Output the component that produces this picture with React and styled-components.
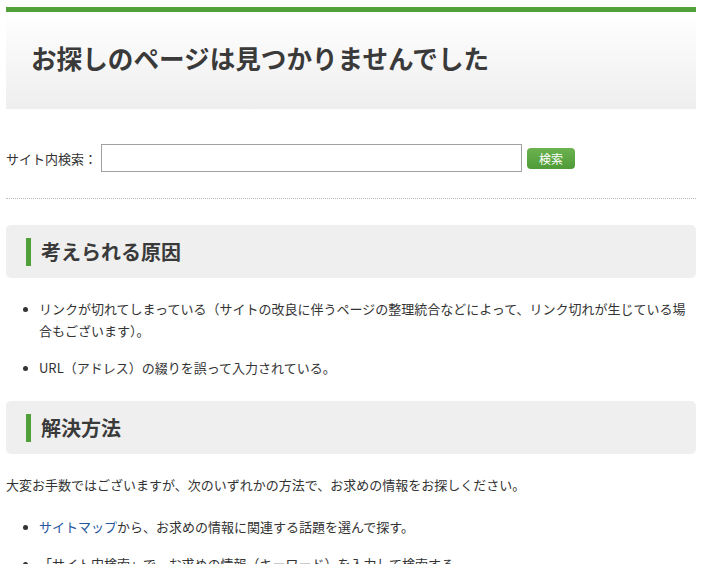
import styled, { createGlobalStyle } from 'styled-components';

const GlobalStyle = createGlobalStyle`
    html, body {
        margin: 0;
        padding: 0;
        background: #fff;
    }
    body {
        font-family: "Noto Sans CJK JP", "Noto Sans", sans-serif;
        color: #333;
        font-size: 13px;
    }
`;

const Page = styled.div`
    padding: 7px 6px 0 6px;
`;

const TitleBox = styled.header`
    border-top: 5px solid #52a03a;
    background: linear-gradient(to bottom, #ffffff 0%, #eeeeee 100%);
    height: 97px;
    display: flex;
    align-items: center;
    padding: 0 25px;
    h1 {
        margin: 0;
        font-size: 25.6px;
        font-weight: bold;
        color: #3a3a3a;
        line-height: 1;
        padding-bottom: 5px;
    }
`;

const SearchForm = styled.form`
    display: flex;
    align-items: center;
    margin-top: 35px;
    padding-bottom: 26px;
    border-bottom: 1px dotted #bbb;
    label {
        font-size: 13px;
        color: #333;
        margin-right: 4px;
    }
`;

const SearchInput = styled.input`
    width: 417px;
    height: 24px;
    border: 1px solid #a0a0a0;
    outline: none;
    box-sizing: content-box;
    padding: 1px;
    margin: 0;
`;

const SearchButton = styled.button`
    margin-left: 5px;
    width: 48px;
    height: 21px;
    border: none;
    border-radius: 4px;
    background: linear-gradient(to bottom, #6cb250 0%, #4e9b37 100%);
    color: #fff;
    font-family: "Noto Sans CJK JP", sans-serif;
    font-size: 12px;
    line-height: 21px;
    padding: 0;
    cursor: pointer;
`;

const SectionHead = styled.h2`
    margin: ${(p) => p.$top}px 0 0 0;
    height: 53px;
    background: #efefef;
    border-radius: 5px;
    display: flex;
    align-items: center;
    padding-left: 20px;
    font-size: 20px;
    font-weight: bold;
    color: #3a3a3a;
    span {
        border-left: 5px solid #52a03a;
        padding-left: 10px;
        line-height: 28px;
        display: block;
    }
`;

const List = styled.ul`
    margin: ${(p) => p.$top}px 0 0 0;
    padding: 0 0 0 33px;
    list-style: disc;
    li {
        line-height: 22px;
        margin-bottom: 15px;
        padding-right: 4px;
    }
    li::marker {
        font-size: 12px;
    }
`;

const Text = styled.p`
    margin: 20px 0 0 0;
    line-height: 22px;
`;

const Link = styled.a`
    color: #24559c;
    text-decoration: none;
`;

export default function App() {
    return (
        <>
            <GlobalStyle />
            <Page>
                <TitleBox>
                    <h1>お探しのページは見つかりませんでした</h1>
                </TitleBox>

                <SearchForm onSubmit={(e) => e.preventDefault()}>
                    <label>サイト内検索：</label>
                    <SearchInput type="text" />
                    <SearchButton type="submit">検索</SearchButton>
                </SearchForm>

                <SectionHead $top={26}>
                    <span>考えられる原因</span>
                </SectionHead>
                <List $top={20}>
                    <li>リンクが切れてしまっている（サイトの改良に伴うページの整理統合などによって、リンク切れが生じている場合もございます）。</li>
                    <li>URL（アドレス）の綴りを誤って入力されている。</li>
                </List>

                <SectionHead $top={22}>
                    <span>解決方法</span>
                </SectionHead>
                <Text>大変お手数ではございますが、次のいずれかの方法で、お求めの情報をお探しください。</Text>
                <List $top={20}>
                    <li><Link href="#">サイトマップ</Link>から、お求めの情報に関連する話題を選んで探す。</li>
                    <li>「サイト内検索」で、お求めの情報（キーワード）を入力して検索する。</li>
                </List>
            </Page>
        </>
    );
}
